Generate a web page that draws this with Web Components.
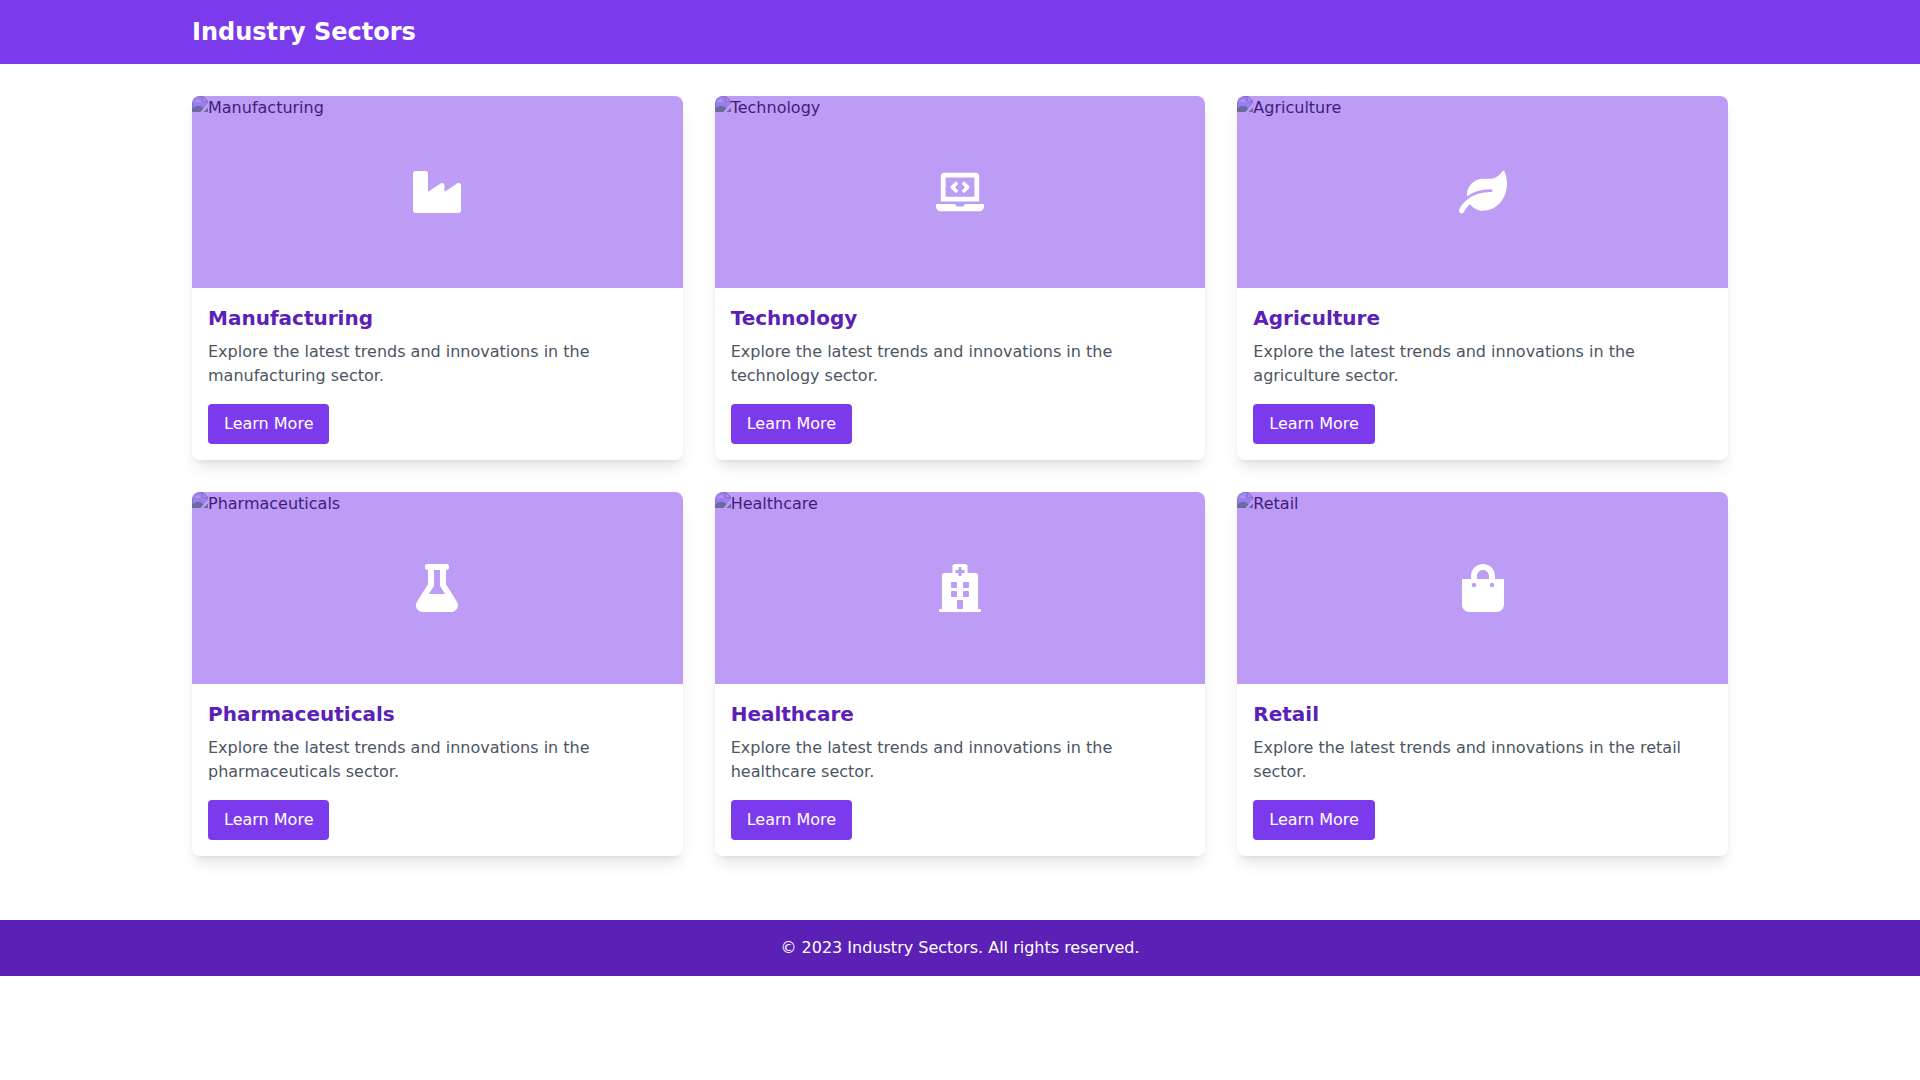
<!DOCTYPE html>
<html lang="en">
<head>
  <meta charset="UTF-8">
  <title>Industry Sectors</title>
  <style>
    body {
      margin: 0;
      background: #fff;
      color: #000;
      font-family: "DejaVu Sans", sans-serif;
      font-size: 16px;
      line-height: 24px;
    }
  </style>
</head>
<body>
  <sector-page>
    <page-header slot="header">Industry Sectors</page-header>
    <sector-card name="Manufacturing" icon="industry">Explore the latest trends and innovations in the manufacturing sector.</sector-card>
    <sector-card name="Technology" icon="laptop">Explore the latest trends and innovations in the technology sector.</sector-card>
    <sector-card name="Agriculture" icon="leaf">Explore the latest trends and innovations in the agriculture sector.</sector-card>
    <sector-card name="Pharmaceuticals" icon="flask">Explore the latest trends and innovations in the pharmaceuticals sector.</sector-card>
    <sector-card name="Healthcare" icon="hospital">Explore the latest trends and innovations in the healthcare sector.</sector-card>
    <sector-card name="Retail" icon="bag">Explore the latest trends and innovations in the retail sector.</sector-card>
    <page-footer slot="footer">© 2023 Industry Sectors. All rights reserved.</page-footer>
  </sector-page>

  <script>
    const icons = {
      industry: ['0 0 512 512', 'M475.115 163.781L336 252.309v-68.28c0-18.916-20.931-30.399-36.885-20.248L160 252.309V56c0-13.255-10.745-24-24-24H24C10.745 32 0 42.745 0 56v400c0 13.255 10.745 24 24 24h464c13.255 0 24-10.745 24-24V184.029c0-18.917-20.931-30.399-36.885-20.248z'],
      laptop: ['0 0 640 512', 'M255.03 261.65c6.25 6.25 16.38 6.25 22.63 0l11.31-11.31c6.25-6.25 6.25-16.38 0-22.63L253.25 192l35.71-35.72c6.25-6.25 6.25-16.38 0-22.63l-11.31-11.31c-6.25-6.25-16.38-6.25-22.63 0l-58.34 58.34c-6.25 6.25-6.25 16.38 0 22.63l58.35 58.34zm96.01-11.3l11.31 11.31c6.25 6.25 16.38 6.25 22.63 0l58.34-58.34c6.25-6.25 6.25-16.38 0-22.63l-58.34-58.34c-6.25-6.25-16.38-6.25-22.63 0l-11.31 11.31c-6.25 6.25-6.25 16.38 0 22.63L386.75 192l-35.71 35.72c-6.25 6.25-6.25 16.38 0 22.63zM624 416H381.54c-.74 19.81-14.71 32-32.74 32H288c-18.69 0-33.02-17.47-32.77-32H16c-8.8 0-16 7.2-16 16v16c0 35.2 28.8 64 64 64h512c35.2 0 64-28.8 64-64v-16c0-8.8-7.2-16-16-16zM576 48c0-26.4-21.6-48-48-48H112C85.6 0 64 21.6 64 48v336h512V48zm-64 272H128V64h384v256z'],
      leaf: ['0 0 576 512', 'M546.2 9.7c-5.6-12.5-21.6-13-28.3-1.2C486.9 62.4 431.4 96 368 96h-80C182 96 96 182 96 288c0 7 .8 13.7 1.5 20.5C161.3 262.8 253.4 224 384 224c8.8 0 16 7.2 16 16s-7.2 16-16 16C132.6 256 26 410.1 2.4 468c-6.6 16.3 1.2 34.9 17.5 41.6 16.4 6.8 35-1.1 41.8-17.3 1.5-3.6 20.9-47.9 71.9-90.6 32.4 43.9 94 85.8 174.9 77.2C465.5 467.5 576 326.7 576 154.3c0-50.2-10.8-102.2-29.8-144.6z'],
      flask: ['0 0 448 512', 'M437.2 403.5L320 215V64h8c13.3 0 24-10.7 24-24V24c0-13.3-10.7-24-24-24H120c-13.3 0-24 10.7-24 24v16c0 13.3 10.7 24 24 24h8v151L10.8 403.5C-18.5 450.6 15.3 512 70.9 512h306.2c55.7 0 89.4-61.5 60.1-108.5zM137.9 320l48.2-77.6c3.7-5.2 5.8-11.6 5.8-18.4V64h64v160c0 6.9 2.2 13.2 5.8 18.4l48.2 77.6h-172z'],
      hospital: ['0 0 448 512', 'M448 492v20H0v-20c0-6.627 5.373-12 12-12h20V120c0-13.255 10.745-24 24-24h88V24c0-13.255 10.745-24 24-24h112c13.255 0 24 10.745 24 24v72h88c13.255 0 24 10.745 24 24v360h20c6.627 0 12 5.373 12 12zM308 192h-40c-6.627 0-12 5.373-12 12v40c0 6.627 5.373 12 12 12h40c6.627 0 12-5.373 12-12v-40c0-6.627-5.373-12-12-12zm-168 64h40c6.627 0 12-5.373 12-12v-40c0-6.627-5.373-12-12-12h-40c-6.627 0-12 5.373-12 12v40c0 6.627 5.373 12 12 12zm104 128h-40c-6.627 0-12 5.373-12 12v84h64v-84c0-6.627-5.373-12-12-12zm64-96h-40c-6.627 0-12 5.373-12 12v40c0 6.627 5.373 12 12 12h40c6.627 0 12-5.373 12-12v-40c0-6.627-5.373-12-12-12zm-116 12c0-6.627-5.373-12-12-12h-40c-6.627 0-12 5.373-12 12v40c0 6.627 5.373 12 12 12h40c6.627 0 12-5.373 12-12v-40zM182 96h26v26a6 6 0 0 0 6 6h20a6 6 0 0 0 6-6V96h26a6 6 0 0 0 6-6V70a6 6 0 0 0-6-6h-26V38a6 6 0 0 0-6-6h-20a6 6 0 0 0-6 6v26h-26a6 6 0 0 0-6 6v20a6 6 0 0 0 6 6z'],
      bag: ['0 0 448 512', 'M352 160v-32C352 57.42 294.579 0 224 0 153.42 0 96 57.42 96 128v32H0v272c0 44.183 35.817 80 80 80h288c44.183 0 80-35.817 80-80V160h-96zm-192-32c0-35.29 28.71-64 64-64s64 28.71 64 64v32H160v-32zm160 120c-13.255 0-24-10.745-24-24s10.745-24 24-24 24 10.745 24 24-10.745 24-24 24zm-192 0c-13.255 0-24-10.745-24-24s10.745-24 24-24 24 10.745 24 24-10.745 24-24 24z']
    }

    class SectorPage extends HTMLElement {
      constructor() {
        super()
        this.attachShadow({ mode: 'open' })
        this.shadowRoot.innerHTML = /*html*/`
          <style>
            :host {
              display: block;
            }

            main {
              display: grid;
              grid-template-columns: repeat(3, minmax(0, 1fr));
              gap: 32px;
              max-width: 1536px;
              margin: 0 auto;
              padding: 32px 0;
            }
          </style>
          <slot name="header"></slot>
          <main><slot></slot></main>
          <slot name="footer"></slot>
        `
      }
    }

    class PageHeader extends HTMLElement {
      constructor() {
        super()
        this.attachShadow({ mode: 'open' })
        this.shadowRoot.innerHTML = /*html*/`
          <style>
            :host {
              display: block;
              background: #7c3aed;
              color: #fff;
              padding: 16px 0;
            }

            h1 {
              max-width: 1536px;
              margin: 0 auto;
              font-size: 24px;
              line-height: 32px;
              font-weight: 700;
            }
          </style>
          <h1><slot></slot></h1>
        `
      }
    }

    class PageFooter extends HTMLElement {
      constructor() {
        super()
        this.attachShadow({ mode: 'open' })
        this.shadowRoot.innerHTML = /*html*/`
          <style>
            :host {
              display: block;
              margin-top: 32px;
              padding: 16px 0;
              background: #5b21b6;
              color: #fff;
              text-align: center;
            }
          </style>
          <slot></slot>
        `
      }
    }

    // Picture area: missing photo and its label, under a tinted layer with the icon
    class SectorPhoto extends HTMLElement {
      connectedCallback() {
        const [viewBox, path] = icons[this.getAttribute('icon')]
        this.attachShadow({ mode: 'open' })
        this.shadowRoot.innerHTML = /*html*/`
          <style>
            :host {
              display: block;
              position: relative;
              height: 192px;
            }

            .photo {
              display: flex;
              align-items: flex-start;
            }

            .broken {
              width: 16px;
              height: 16px;
              flex: none;
            }

            .tint {
              position: absolute;
              inset: 0;
              background: rgb(124 58 237 / .5);
              display: flex;
              align-items: center;
              justify-content: center;
            }

            .icon {
              width: 48px;
              height: 48px;
              fill: #fff;
            }
          </style>
          <div class="photo">
            <svg class="broken" viewBox="0 0 16 16">
              <path d="M0 0h11l5 5v11H0z" fill="#a3a3a3"/>
              <path d="M1 1h9.500L15 5.500V15H1z" fill="#b5c7f5"/>
              <path d="M2.500 6c0-1 .8-1.600 1.600-1.400C4.500 3 7 2.800 7.500 4.400 8.600 4.400 9 5.200 9 6z" fill="#e8eefc"/>
              <path d="M0 16v-3.500C2 10.500 4.500 9.700 6.500 9.700S10 10.800 11 12v4zM11 16v-3l5-2v5z" fill="#5c9a50"/>
              <path d="M10.500.5v5h5z" fill="#e6e6e6" stroke="#a3a3a3"/>
              <path d="M16 7L8.500 16h3L16 11.500z" fill="#fff"/>
            </svg>
            <span>${this.getAttribute('label')}</span>
          </div>
          <div class="tint">
            <svg class="icon" viewBox="${viewBox}"><path d="${path}"/></svg>
          </div>
        `
      }
    }

    class SectorCard extends HTMLElement {
      connectedCallback() {
        const name = this.getAttribute('name')
        this.attachShadow({ mode: 'open' })
        this.shadowRoot.innerHTML = /*html*/`
          <style>
            :host {
              display: block;
              background: #fff;
              border-radius: 8px;
              overflow: hidden;
              box-shadow: 0 10px 15px -3px rgb(0 0 0 / .1), 0 4px 6px -4px rgb(0 0 0 / .1);
            }

            .content {
              padding: 16px;
            }

            h2 {
              margin: 0 0 8px;
              font-size: 20px;
              line-height: 28px;
              font-weight: 700;
              color: #5b21b6;
            }

            p {
              margin: 0 0 16px;
              color: #4b5563;
            }

            button {
              display: block;
              border: none;
              border-radius: 4px;
              padding: 8px 16px;
              background: #7c3aed;
              color: #fff;
              font: inherit;
              cursor: pointer;
            }
          </style>
          <sector-photo label="${name}" icon="${this.getAttribute('icon')}"></sector-photo>
          <div class="content">
            <h2>${name}</h2>
            <p><slot></slot></p>
            <button>Learn More</button>
          </div>
        `
      }
    }

    customElements.define('sector-page', SectorPage)
    customElements.define('page-header', PageHeader)
    customElements.define('page-footer', PageFooter)
    customElements.define('sector-photo', SectorPhoto)
    customElements.define('sector-card', SectorCard)
  </script>
</body>
</html>
